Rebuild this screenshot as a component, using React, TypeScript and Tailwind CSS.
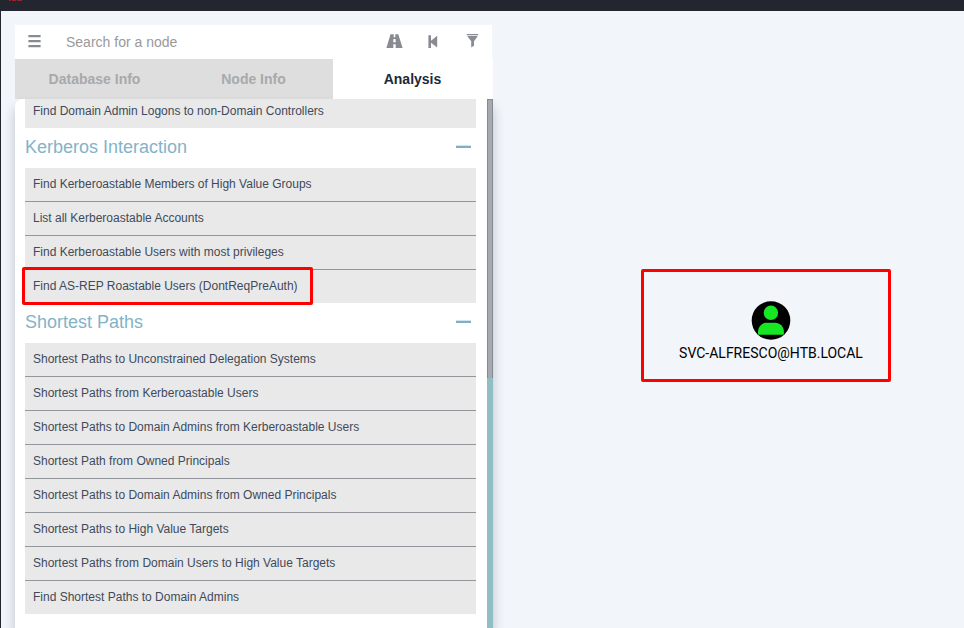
const kerberos = [
  'Find Kerberoastable Members of High Value Groups',
  'List all Kerberoastable Accounts',
  'Find Kerberoastable Users with most privileges',
  'Find AS-REP Roastable Users (DontReqPreAuth)',
];

const paths = [
  'Shortest Paths to Unconstrained Delegation Systems',
  'Shortest Paths from Kerberoastable Users',
  'Shortest Paths to Domain Admins from Kerberoastable Users',
  'Shortest Path from Owned Principals',
  'Shortest Paths to Domain Admins from Owned Principals',
  'Shortest Paths to High Value Targets',
  'Shortest Paths from Domain Users to High Value Targets',
  'Find Shortest Paths to Domain Admins',
];

function Query({ label, highlighted }: { label: string; highlighted?: boolean }) {
  return (
    <li className="relative box-content flex h-[33px] items-center border-b border-[#93979c] bg-[#e9e9e9] pl-2 text-[12px] text-[#414a5a] last:border-b-0">
      <span className="-translate-y-px">{label}</span>
      {highlighted && (
        <span className="absolute -top-[3px] -left-[3px] h-[38px] w-[291px] rounded-[2px] border-3 border-[#ff0000]" />
      )}
    </li>
  );
}

function Section({ title, items }: { title: string; items: string[] }) {
  return (
    <section>
      <h2 className="flex h-10 items-center justify-between text-[18px] text-[#83b3c9]">
        <span className="-translate-y-px">{title}</span>
        <span className="mr-[5px] mb-[3px] h-[3px] w-[15px] border-t border-[#d3e4ec] bg-[#7dafc6] bg-clip-padding" />
      </h2>
      <ul>
        {items.map((item) => (
          <Query key={item} label={item} highlighted={item.includes('AS-REP')} />
        ))}
      </ul>
    </section>
  );
}

function SearchBar() {
  return (
    <div className="flex h-[34px] w-[477px] items-center bg-white text-[#888b92]">
      <svg className="mb-[2px] ml-[13px] h-[14px] w-[13px] shrink-0" viewBox="0 0 13 14" fill="currentColor">
        <path d="M.4 .9h12.2v2.4H.4zM.4 6h12.2v2.3H.4zM.4 10.9h12.2v2.3H.4z" />
      </svg>
      <span className="ml-[25px] flex-1 text-[14px] text-[#999]">Search for a node</span>
      <svg className="mb-[2px] h-[16px] w-[17px]" viewBox="0 0 17 16" fill="currentColor">
        <path d="M4.5 1.2H7.7V4.2H9.3V1.2H12.3L16.6 15H9.7V11.2H7.3V15H.4ZM7.5 6L7.2 9.2H9.8L9.5 6Z" />
      </svg>
      <svg className="ml-[25px] h-[14px] w-[10px]" viewBox="0 0 10 14" fill="currentColor">
        <path d="M.4 .2H3V5.7L9.2 .8V12.6L3 7.8V13H.4Z" />
      </svg>
      <svg className="mr-[13px] mb-[2px] ml-[28px] h-[14px] w-[13px]" viewBox="0 0 13 14" fill="currentColor">
        <path d="M.8 0H12.2V1.3H.8ZM1.2 2.1H11.8L8 7.2V11.8L5.2 13.6V7.2Z" />
      </svg>
    </div>
  );
}

function Tabs() {
  return (
    <div className="flex h-10 bg-[#dedede] text-[14px] font-bold text-[#a8a9ac]">
      <div className="flex w-[159px] items-center justify-center">Database Info</div>
      <div className="flex w-[159px] items-center justify-center">Node Info</div>
      <div className="flex flex-1 items-center justify-center bg-white pr-px text-[#202938]">Analysis</div>
    </div>
  );
}

function UserNode() {
  return (
    <div className="absolute top-[269px] left-[640px] flex h-[113px] w-[250px] flex-col items-center rounded-[2px] border-3 border-[#ff0000] pt-[29px] pl-[10px]">
      <svg className="h-[39px] w-[39px] shrink-0 overflow-visible" viewBox="0.5 0 39 39">
        <circle cx="19.5" cy="19.5" r="19.3" />
        <g fill="#17e625">
          <circle cx="19.4" cy="11.8" r="7.2" />
          <path d="M6.5 33V31C6.5 25.5 10.5 21.7 15.3 21.7H23.7C28.5 21.7 32.4 25.5 32.4 31V33Q32.4 33.8 31.4 33.8H7.5Q6.5 33.8 6.5 33Z" />
        </g>
      </svg>
      <span className="mt-[3px] font-[Roboto,sans-serif] text-[14px] leading-5 text-black">SVC-ALFRESCO@HTB.LOCAL</span>
    </div>
  );
}

export default function App() {
  return (
    <div className="relative h-[628px] w-[964px] overflow-hidden border-l border-[#23252f] bg-[#f2f5fa] font-['Liberation_Sans',Arial,sans-serif]">
      <header className="h-[11px] bg-[#23252f]">
        <div className="ml-[8px] flex h-px gap-px">
          <span className="w-[2px] bg-[#98242b]" />
          <span className="w-[4px] bg-[#98242b]" />
          <span className="w-[5px] bg-[#98242b]" />
        </div>
      </header>
      <aside className="mt-[14px] ml-[14px] w-[478px]">
        <SearchBar />
        <Tabs />
        <div className="h-[529px] rounded-tl-[8px] bg-white shadow-[0_8px_12px_rgba(30,40,60,0.25)]">
          <div className="flex h-full overflow-hidden">
            <div className="ml-[10px] w-[451px] shrink-0">
              <ul className="-mt-1">
                <Query label="Find Domain Admin Logons to non-Domain Controllers" />
              </ul>
              <Section title="Kerberos Interaction" items={kerberos} />
              <Section title="Shortest Paths" items={paths} />
            </div>
            <div className="ml-auto w-[6px] bg-[#91bec4]">
              <div className="h-[279px] border-x border-t border-[#858a90] bg-[#a5aab0]" />
            </div>
          </div>
        </div>
      </aside>
      <UserNode />
    </div>
  );
}
